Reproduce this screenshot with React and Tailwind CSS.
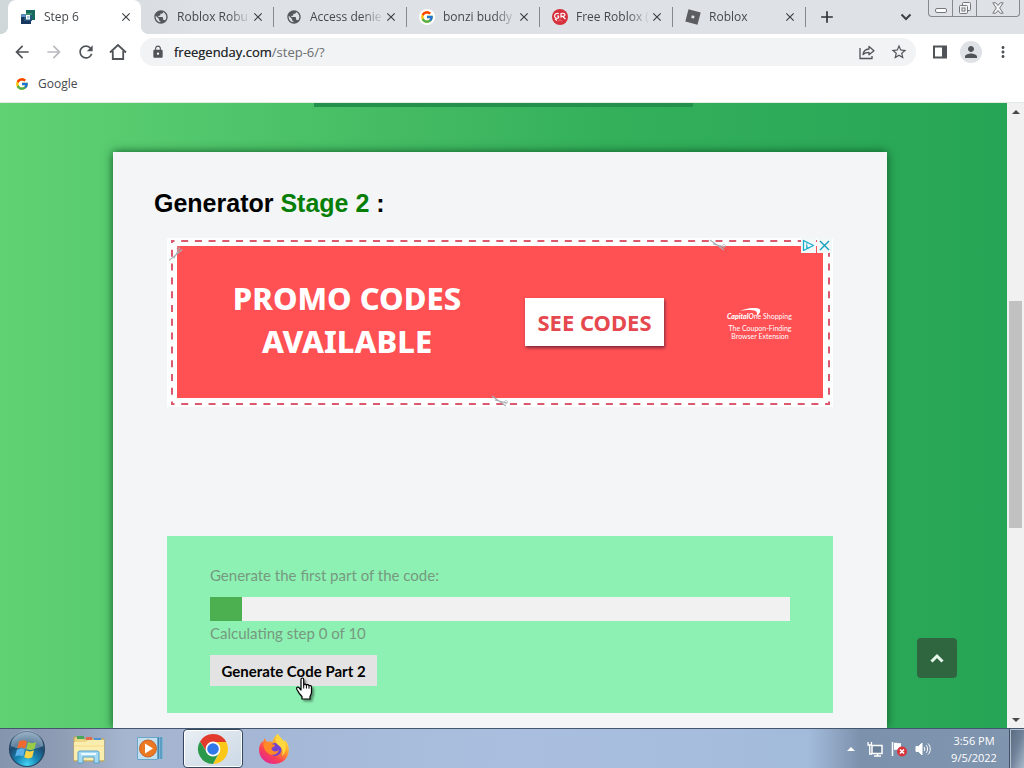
import React from "react";
import {
  MdArrowBack,
  MdArrowForward,
  MdRefresh,
  MdLock,
  MdStarBorder,
  MdPerson,
  MdMoreVert,
  MdPublic,
  MdClose,
  MdAdd,
} from "react-icons/md";
import { FcGoogle } from "react-icons/fc";

const StepIcon = () => (
  <svg viewBox="0 0 16 16" className="size-4 shrink-0" aria-hidden="true">
    <path d="M6 1h9v10h-3V4H6z" fill="#17695f" />
    <path d="M1 5h3v7h7v3H1z" fill="#17375c" />
    <path d="M6 4h6v2H6z" fill="#35906f" />
    <path d="M1 5h5v3H1z" fill="#5b8cc0" />
    <path d="M4 8h2v4H4zM10 6h2v6h-2zM6 10.500h4V12H6z" fill="#24557a" />
    <path d="M7 7h2.500v2.500H7z" fill="#a9c6dc" />
  </svg>
);

const GlobeIcon = () => <MdPublic className="size-4 shrink-0 text-[#54585c]" aria-hidden="true" />;

const GoogleIcon = () => (
  <span className="flex size-4 shrink-0 items-center justify-center rounded-full bg-white">
    <FcGoogle className="size-[14px]" aria-hidden="true" />
  </span>
);

const RedIcon = () => (
  <svg viewBox="0 0 16 16" className="size-4 shrink-0" aria-hidden="true">
    <circle cx="8" cy="8" r="8" fill="#d5303b" />
    <path d="M6.800 4.600C4.500 3.700 2.500 5 2.600 7.300c.1 2 2.500 2.700 4 1.200V7H5M9 8.800V4.600c2.500-.9 4.300.2 3.800 1.600-.4 1-2 1.300-3.200.9M3 10l2 1.500M11 8l2.500 2" fill="none" stroke="#fff" strokeWidth="1.200" />
    <path d="M6 12.500l2-2 2 2" fill="none" stroke="#f3a5a9" strokeWidth=".8" />
  </svg>
);

const RobloxIcon = () => (
  <svg viewBox="0 0 16 16" className="size-4 shrink-0" aria-hidden="true">
    <path fillRule="evenodd" d="M3.500.300l12.200 3.200-3.200 12.200-12.200-3.200zM6.900 6.200l-.7 2.700 2.700.7.700-2.700z" fill="#5b5d60" />
  </svg>
);

const TABS = [
  { title: "Step 6", Icon: StepIcon },
  { title: "Roblox Robu", Icon: GlobeIcon },
  { title: "Access denie", Icon: GlobeIcon },
  { title: "bonzi buddy", Icon: GoogleIcon },
  { title: "Free Roblox (", Icon: RedIcon },
  { title: "Roblox", Icon: RobloxIcon },
];

function TabStrip() {
  return (
    <header className="flex h-[34px] shrink-0 bg-linear-to-r from-[#cfd7d8] via-[#dee1e6] via-20% to-[#dee1e6] pl-2">
      <div role="tablist" className="flex min-w-0">
        {TABS.map(({ title, Icon }, i) => (
          <div
            key={title}
            className={
              i === 0
                ? "relative flex w-[133px] items-center rounded-t-lg bg-white pr-2 pl-3 before:absolute before:bottom-0 before:-left-2 before:size-2 before:bg-[radial-gradient(circle_at_0_0,transparent_8px,white_8px)] after:absolute after:-right-2 after:bottom-0 after:size-2 after:bg-[radial-gradient(circle_at_100%_0,transparent_8px,white_8px)]"
                : "flex w-[133px] items-center pl-3"
            }
          >
            <Icon />
            <button
              role="tab"
              aria-selected={i === 0}
              className="ml-2 min-w-0 flex-1 text-left text-xs whitespace-nowrap text-[#45494d] [mask-image:linear-gradient(to_right,black_70%,transparent)]"
            >
              {title}
            </button>
            <button aria-label={"Close " + title} className="shrink-0 text-[#3c4043]">
              <MdClose className="size-[14px]" />
            </button>
            {i > 0 && <span className="ml-2 h-5 w-px bg-[#85898f]" />}
          </div>
        ))}
      </div>
      <button aria-label="New tab" className="ml-[11px] text-[#2f3337]">
        <MdAdd className="size-5" />
      </button>
      <div className="flex-1" />
      <button aria-label="Search tabs" className="mr-4 text-[#3c4043]">
        <svg viewBox="0 0 12 12" className="size-3" fill="none" stroke="currentColor" strokeWidth="2">
          <path d="M1.500 3.500L6 8l4.500-4.500" />
        </svg>
      </button>
      <div className="mr-1 flex h-[17px] w-[92px] rounded-b border border-t-0 border-[#85898f] text-[#74787d]">
        <button aria-label="Minimize" className="flex flex-1 items-end justify-center border-r border-[#85898f] pb-[3px]">
          <svg viewBox="0 0 12 5" className="h-[5px] w-3"><rect x=".5" y=".5" width="11" height="4" rx="1.500" fill="#fff" stroke="currentColor" /></svg>
        </button>
        <button aria-label="Restore" className="flex flex-1 items-center justify-center border-r border-[#85898f]">
          <svg viewBox="0 0 14 14" className="size-[14px]" fill="#f2f3f5" stroke="currentColor">
            <rect x="4.500" y="1.500" width="8" height="8" rx="1" />
            <rect x="1.500" y="4.500" width="8" height="8" rx="1" />
            <rect x="4" y="7" width="3" height="3" />
          </svg>
        </button>
        <button aria-label="Close window" className="flex w-[42px] items-center justify-center">
          <svg viewBox="0 0 12 12" className="size-3" fill="#f2f3f5" stroke="currentColor">
            <path d="M.8.800h3L6 3.500 8.200.8h3L7.700 6l3.500 5.200h-3L6 8.500l-2.200 2.700h-3L4.300 6z" />
          </svg>
        </button>
      </div>
    </header>
  );
}

function Toolbar() {
  return (
    <nav className="flex h-9 shrink-0 items-center bg-white pl-3 text-[#505458]">
      <button aria-label="Back"><MdArrowBack className="size-5" /></button>
      <button aria-label="Forward" className="ml-3 text-[#b9bbbe]"><MdArrowForward className="size-5" /></button>
      <button aria-label="Reload" className="ml-3"><MdRefresh className="size-5" /></button>
      <button aria-label="Home" className="ml-3">
        <svg viewBox="0 0 20 20" className="size-5" fill="none" stroke="currentColor" strokeWidth="1.800">
          <path d="M2 10.500L10 3l8 7.500M4.800 9v8h10.400V9" />
        </svg>
      </button>
      <div className="ml-3 flex h-7 min-w-0 flex-1 items-center rounded-full bg-[#f1f3f4] pr-2 pl-[11px]">
        <MdLock className="size-[14px] shrink-0" aria-hidden="true" />
        <div className="relative ml-[9px] min-w-0 flex-1 text-[13px]/5">
          <input
            aria-label="Address"
            defaultValue="freegenday.com/step-6/?"
            className="w-full bg-transparent text-[#6b6f73] outline-none"
          />
          <span aria-hidden="true" className="pointer-events-none absolute inset-y-0 left-0 text-[#26292c]">freegenday.com</span>
        </div>
        <button aria-label="Share">
          <svg viewBox="0 0 18 18" className="size-[18px]" fill="none" stroke="currentColor" strokeWidth="1.300">
            <path d="M2 5v10.500h12V13" />
            <path d="M5 11.500C5.500 8 7.500 6.200 11 6V3.500l5 4.200-5 4V9.300c-2.700 0-4.500.7-6 2.200z" strokeLinejoin="round" />
          </svg>
        </button>
        <button aria-label="Bookmark" className="ml-3.5"><MdStarBorder className="size-[18px]" /></button>
      </div>
      <button aria-label="Side panel" className="ml-4">
        <svg viewBox="0 0 16 16" className="size-4" fill="none" stroke="currentColor" strokeWidth="2">
          <path d="M2 2.500h12v11H2z" />
          <path d="M10 2h4v12h-4z" fill="currentColor" stroke="none" />
        </svg>
      </button>
      <button aria-label="Profile" className="ml-3 flex size-[22px] items-center justify-center rounded-full bg-[#dee1e6]">
        <MdPerson className="size-[18px]" />
      </button>
      <button aria-label="Menu" className="mr-3 ml-3"><MdMoreVert className="size-[18px]" /></button>
    </nav>
  );
}

function Bookmarks() {
  return (
    <div className="flex h-[33px] shrink-0 items-center border-b border-[#e4ebe5] bg-white pb-1 pl-[14px]">
      <a href="#google" className="flex items-center gap-2 text-xs text-[#45494d]">
        <GoogleIcon />
        Google
      </a>
    </div>
  );
}

const Scissors = () => (
  <svg viewBox="0 0 18 12" className="h-3 w-[18px]" fill="none" stroke="#a9b0b5" aria-hidden="true">
    <path d="M1 1l14 10M4 5l12 3" strokeWidth="1.100" />
    <circle cx="15" cy="7" r="1.500" strokeWidth=".6" />
  </svg>
);

function PromoAd() {
  return (
    <section aria-label="Advertisement" className="relative bg-[#fdfefe] px-2.5 pt-2 pb-[9px]">
      <svg viewBox="0 0 666 169" preserveAspectRatio="none" className="absolute inset-0 size-full" fill="none" stroke="#dc5a70" strokeWidth="2" aria-hidden="true">
        <path d="M4 3H663M4 166H663" strokeDasharray="7 6.700" strokeDashoffset="3.500" />
        <path d="M5 2V167M662 2V167" strokeDasharray="7 6.800" strokeDashoffset="4" />
      </svg>
      <div className="flex h-[152px] items-center bg-[#ff5054] font-['Noto_Sans',sans-serif] text-white">
        <p className="ml-[53px] w-[234px] shrink-0 pb-1 text-center text-[31px]/[43px] font-extrabold whitespace-nowrap">
          PROMO CODES
          <br />
          AVAILABLE
        </p>
        <button className="ml-[61px] h-12 w-[139px] shrink-0 bg-white text-[22px] font-bold whitespace-nowrap text-[#e5484f] shadow-[1px_2px_3px_#7d2b3a]">
          SEE CODES
        </button>
        <div className="ml-auto mr-[30px] w-[66px] pt-2 text-center font-['Lato',sans-serif] text-[7px]/[8px] whitespace-nowrap">
          <div className="relative text-left">
            <svg viewBox="0 0 24 10" className="absolute -top-1 left-[13px] h-2.5 w-6" aria-hidden="true">
              <path d="M0 3C8-.5 18-1 20 1.500c1 2-1 5-4 7 1.500-3 1.500-5-1.500-6C11 1.500 5 2 0 3z" fill="#fff" />
            </svg>
            <i className="font-black">Capital</i><i className="font-bold">O</i>ne Shopping
          </div>
          <p className="mt-1">
            The Coupon-Finding
            <br />
            Browser Extension
          </p>
        </div>
      </div>
      <div className="absolute top-0 right-px flex gap-px">
        <button aria-label="AdChoices" className="flex size-[15px] items-center justify-center bg-[#f2f7f8]">
          <svg viewBox="0 0 13 13" className="size-[13px]" fill="none" stroke="#13aaca" strokeWidth="1.200">
            <path d="M1.500 1.500v10l10-5z" strokeLinejoin="round" />
            <path d="M4.800 5.500v3.300h2" />
            <path d="M4.800 3.800v.9" />
          </svg>
        </button>
        <button aria-label="Close ad" className="flex size-[15px] items-center justify-center bg-[#f2f7f8]">
          <svg viewBox="0 0 11 11" className="size-[11px]" stroke="#139fbe" strokeWidth="1.400">
            <path d="M1 1l9 9M10 1l-9 9" />
          </svg>
        </button>
      </div>
      <div className="absolute top-px left-[542px]"><Scissors /></div>
      <div className="absolute bottom-0 left-[324px]"><Scissors /></div>
      <div className="absolute top-2.5 left-0 -rotate-75"><Scissors /></div>
    </section>
  );
}

function CodePanel() {
  return (
    <section className="bg-[#8df1b3] px-[43px] py-[27px] font-['Lato',sans-serif] text-[15px]/6 text-[#76997f]">
      <p id="gen-label">Generate the first part of the code:</p>
      <div role="progressbar" aria-labelledby="gen-label" aria-valuenow={5} className="mt-2.5 h-6 bg-[#f0f1f0]">
        <div className="h-full w-8 bg-[#4caf50]" />
      </div>
      <p>Calculating step 0 of 10</p>
      <button className="relative mt-2.5 flex h-[31px] w-[167px] items-center justify-center bg-[#e2e3e2] text-[15px] font-bold whitespace-nowrap text-black">
        Generate Code Part 2
        <svg viewBox="0 0 20 24" className="absolute top-[22px] left-[85px] h-6 w-5 drop-shadow-[2px_2px_1px_rgba(0,0,0,0.4)]" aria-hidden="true">
          <path d="M6 2.500c0-2 2.700-2 2.700 0V8c.3-1.300 2.500-1.200 2.700.3.500-1 2.400-.8 2.600.7.700-.9 2.500-.5 2.500 1.200V15c0 2-1 3.500-1.500 4.500V22H7v-2.500C5 17.500 3 14.500 1.800 12.200.9 10.200 3 9.300 4.300 11L6 13z" fill="#fff" stroke="#000" strokeWidth="1.200" strokeLinejoin="round" />
          <path d="M8.700 8v3.500M11.400 8.500v3M14 9.200v2.500" stroke="#000" strokeWidth="1" />
        </svg>
      </button>
    </section>
  );
}

function ScrollBar() {
  return (
    <div className="flex w-[17px] shrink-0 flex-col items-center bg-[#f1f1f1] text-[#45494d]">
      <button aria-label="Scroll up" className="flex h-[17px] items-center">
        <svg viewBox="0 0 8 4" className="h-1 w-2"><path d="M0 4l4-4 4 4z" fill="currentColor" /></svg>
      </button>
      <div className="flex w-full flex-1 flex-col px-0.5">
        <div className="flex-181" />
        <div className="flex-227 bg-[#c1c1c1]" />
        <div className="flex-183" />
      </div>
      <button aria-label="Scroll down" className="flex h-[17px] items-center">
        <svg viewBox="0 0 8 4" className="h-1 w-2"><path d="M0 0h8L4 4z" fill="currentColor" /></svg>
      </button>
    </div>
  );
}

function Page() {
  return (
    <div className="flex min-h-0 flex-1">
      <main className="relative flex min-w-0 flex-1 flex-col overflow-hidden bg-linear-to-r from-[#60d274] via-[#34b05b] via-60% to-[#26a556]">
        <div className="mx-auto h-1 w-[379px] shrink-0 bg-[#23914c]" />
        <div className="flex flex-1 justify-center pt-[45px] pr-[7px]">
          <article className="w-full max-w-[774px] bg-[#f3f5f7] px-[41px] pt-8 shadow-[0_0_9px_#0b5424]">
            <h1 className="font-['Liberation_Sans',Arial,sans-serif] text-[25px]/[38px] font-bold text-black">
              Generator <span className="text-[#077f07]">Stage 2</span> :
            </h1>
            <div className="mt-4 px-[13px]">
              <PromoAd />
              <div className="mt-[129px]">
                <CodePanel />
              </div>
            </div>
          </article>
        </div>
        <button aria-label="Back to top" className="absolute right-[50px] bottom-[50px] flex size-10 items-center justify-center rounded bg-[#2f6640] text-[#e6f7e9]">
          <svg viewBox="0 0 16 12" className="h-3 w-4" fill="none" stroke="currentColor" strokeWidth="3">
            <path d="M2.500 9.500L8 4l5.500 5.500" />
          </svg>
        </button>
      </main>
      <ScrollBar />
    </div>
  );
}

const StartOrb = () => (
  <svg viewBox="0 0 38 38" className="size-[38px]">
    <defs>
      <radialGradient id="orb" cx=".5" cy=".95" r=".9">
        <stop offset="0" stopColor="#43d5f5" />
        <stop offset=".35" stopColor="#1787b5" />
        <stop offset=".7" stopColor="#1d4a70" />
        <stop offset="1" stopColor="#6d8ba6" />
      </radialGradient>
    </defs>
    <circle cx="19" cy="19" r="17.500" fill="url(#orb)" stroke="#274763" strokeWidth="1.200" />
    <path d="M3 16a16 16 0 0132 0c-8 4-22 5-32 0z" fill="#dceaf5" opacity=".35" />
    <path d="M11 11.500c3-1.800 5.500-1.500 8 0l-1.800 7c-2.700-1.500-5-1.500-8 0z" fill="#ee6a30" />
    <path d="M20 12c3 1.600 5.500 1.500 8.300 0l-1.900 7c-2.600 1.500-5 1.500-8 0z" fill="#9acb48" />
    <path d="M8.900 19.800c3-1.600 5.400-1.500 8 0l-1.800 6.800c-2.700-1.500-5-1.500-8 0z" fill="#5bb2ea" />
    <path d="M18 20.300c2.800 1.500 5.300 1.400 8 0l-1.800 7c-2.700 1.500-5.200 1.500-8 0z" fill="#fbd445" />
  </svg>
);

const Explorer = () => (
  <svg viewBox="0 0 34 32" className="h-8 w-[34px]">
    <path d="M2 4h8l2 2h20v22H2z" fill="#ead687" stroke="#c0a45a" />
    <path d="M5 3h7v3H5z" fill="#46a65a" />
    <path d="M14 4h6v3h-6z" fill="#e2694c" />
    <path d="M22 5h7v3h-7z" fill="#4a93d0" />
    <path d="M2 9h12l2-2h16v20H2z" fill="#fbedae" />
    <path d="M2 13h30" stroke="#f3d988" />
    <path d="M6 30V20q0-2 2-2h17q2 0 2 2v10h-5v-6H11v6z" fill="#a4d9f3" stroke="#55a0cc" />
    <path d="M9 21h15" stroke="#eaf8ff" strokeWidth="2" />
  </svg>
);

const MediaPlayer = () => (
  <svg viewBox="0 0 30 28" className="h-7 w-[30px]">
    <path d="M7 2h20v22H7z" fill="#7cb4d5" />
    <path d="M25 2v22M22.500 2v22" stroke="#3f86b1" />
    <path d="M1.500 2.500h20v22h-20z" fill="#c2dff0" stroke="#6ba5c8" />
    <circle cx="12" cy="13.500" r="8.500" fill="#ec7922" stroke="#c2632b" />
    <path d="M9 8.500v10l8-5z" fill="#fff" />
  </svg>
);

const Chrome = () => (
  <svg viewBox="0 0 32 32" className="size-8">
    <path d="M16 9h13.300A15 15 0 0116 31l6.300-11z" fill="#fbc718" />
    <path d="M3 8.500A15 15 0 0129.300 9H16l-6.300 10z" fill="#e23b2e" />
    <path d="M3 8.500A15 15 0 0016 31l6.100-11.500H9.900z" fill="#2a9a4a" />
    <circle cx="16" cy="16" r="7.400" fill="#fff" />
    <circle cx="16" cy="16" r="5.800" fill="#3178ea" />
  </svg>
);

const Firefox = () => (
  <svg viewBox="0 0 32 32" className="size-8">
    <defs>
      <linearGradient id="fox" x1=".85" y1=".05" x2=".25" y2=".9">
        <stop offset="0" stopColor="#fff04a" />
        <stop offset=".4" stopColor="#ff9e29" />
        <stop offset=".75" stopColor="#fb4055" />
        <stop offset="1" stopColor="#e72c86" />
      </linearGradient>
    </defs>
    <path d="M20 1c1 3 4 4.500 6.500 8 .3-.8.200-1.500 0-2.500C30 10 31.500 15 30.500 20 29 27 23 31 16 31 8 31 1 25 1 17c0-4 1.500-7 3.500-9l.3 2L6.500 5 9 9c2-.8 4-.5 5.500.3C15 6 17 2.500 20 1z" fill="url(#fox)" />
    <circle cx="17" cy="16.500" r="6.500" fill="#7442d2" />
    <path d="M6 10c3-1.500 6-.5 7.500 1.200 2 0 3.500.5 3.500 1.300-.5 1.500-3.500 1.500-3.500 3.500 1 3 5 3 7.500 1-1 5-8 6.500-12 2.500C6.500 17 5 13 6 10z" fill="#ff8a26" />
    <path d="M20 1c1 3 4 4.500 6.500 8C29 13 28 20 24 23c2-6-1-9-4-11-3-2.500-3-7 0-11z" fill="#ffd83d" />
  </svg>
);

function Taskbar() {
  return (
    <footer className="flex h-10 shrink-0 border-t border-[#44566e] bg-[linear-gradient(to_right,#8496ae_0,#8e9cb4_6%,#a6b5cf_12%,#a4b6d4_22%,#aabfdf_50%,#a3bbdb_79%,#7c91ac_84%,#8095ae_100%)]">
      <button aria-label="Start" className="ml-2 flex w-[38px] items-center"><StartOrb /></button>
      <button aria-label="Windows Explorer" className="ml-3.5 flex w-[58px] items-center justify-center"><Explorer /></button>
      <button aria-label="Media Player" className="ml-1 flex w-[58px] items-center justify-center"><MediaPlayer /></button>
      <button aria-label="Google Chrome" className="ml-[3px] flex w-[60px] items-center justify-center rounded-sm border border-[#33475f] bg-linear-to-br from-[#e9eff4] to-[#cbd8e4] shadow-[inset_0_0_0_1px_white]"><Chrome /></button>
      <button aria-label="Firefox" className="ml-0.5 flex w-[58px] items-center justify-center"><Firefox /></button>
      <div className="flex-1" />
      <div className="flex items-center text-white">
        <button aria-label="Show hidden icons">
          <svg viewBox="0 0 8 4" className="h-1 w-2"><path d="M0 4l4-4 4 4z" fill="#fff" /></svg>
        </button>
        <button aria-label="Network" className="ml-3">
          <svg viewBox="0 0 16 16" className="size-4" fill="none">
            <path d="M5 4.500h10v8H5z" fill="#687d96" stroke="#fff" strokeWidth="1.500" />
            <path d="M7 15h7M10.500 13v2" stroke="#fff" strokeWidth="1.500" />
            <path d="M1 1v3h3.500V1M2.700 4v9H5" stroke="#fff" strokeWidth="1.300" />
          </svg>
        </button>
        <button aria-label="Action center" className="ml-2">
          <svg viewBox="0 0 16 16" className="size-4">
            <path d="M1.500 1v14" stroke="#fff" strokeWidth="1.500" />
            <path d="M3 2c3-1 4 1 7 0v7c-3 1-4-1-7 0z" fill="#fff" />
            <circle cx="11" cy="10.500" r="5" fill="#d8343a" />
            <path d="M9 8.500l4 4M13 8.500l-4 4" stroke="#fff" strokeWidth="1.600" />
          </svg>
        </button>
        <button aria-label="Volume" className="ml-2">
          <svg viewBox="0 0 16 16" className="size-4" fill="none" stroke="#fff">
            <path d="M1 5.500h2.500L7 2v12l-3.500-3.500H1z" fill="#fff" />
            <path d="M9 6c1 1 1 3 0 4M11 4c2 2 2 6 0 8M13 2.500c3 3 3 8 0 11" />
          </svg>
        </button>
      </div>
      <time className="ml-4 flex w-[54px] flex-col items-center justify-center text-[11px]/[17px] whitespace-nowrap text-white">
        <span>3:56 PM</span>
        <span>9/5/2022</span>
      </time>
      <button aria-label="Show desktop" className="ml-2 w-[15px] border-l border-[#3f5067] bg-linear-to-br from-[#596a7e] via-[#6f8299] to-[#a9bacb] shadow-[inset_1px_1px_0_#b2c0d0]" />
    </footer>
  );
}

export default function App() {
  return (
    <div className="flex h-screen flex-col overflow-hidden font-['Open_Sans',sans-serif]">
      <TabStrip />
      <Toolbar />
      <Bookmarks />
      <Page />
      <Taskbar />
    </div>
  );
}
